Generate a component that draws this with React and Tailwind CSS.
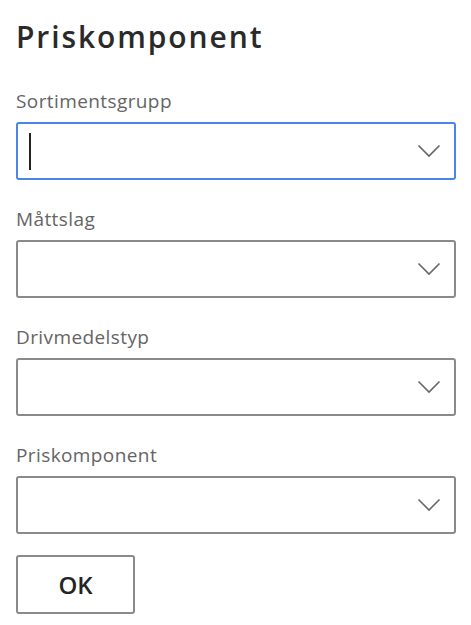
import React from "react";

function Chevron() {
  return (
    <svg width="24" height="14" viewBox="0 0 24 14" fill="none">
      <path d="M1.5 1.5 L12 12 L22.5 1.5" stroke="#666" strokeWidth="1.6" />
    </svg>
  );
}

function Field({ label, focused }) {
  return (
    <div className="flex flex-col">
      <div className="h-[30px] leading-[30px] text-[19px] tracking-[0.4px] text-[#646464]">{label}</div>
      <div
        className={`mt-[6px] h-[58px] w-[440px] rounded-[3px] flex items-center justify-between pl-[11px] pr-[13px] ${
          focused ? "border-2 border-[#4a86e8]" : "border-2 border-[#8a8a8a]"
        }`}
      >
        <div>{focused && <div className="w-[2px] h-[37px] bg-[#222]" />}</div>
        <Chevron />
      </div>
    </div>
  );
}

export default function App() {
  return (
    <div
      className="bg-white w-[471px] h-[625px] px-4 pt-[14px]"
      style={{ fontFamily: '"Open Sans", "Noto Sans", sans-serif' }}
    >
      <h1 className="h-[72px] text-[30px] leading-[46px] tracking-[1.9px] font-semibold text-[#2a2a2a]">
        Priskomponent
      </h1>
      <div className="flex flex-col gap-[24px]">
        <Field label="Sortimentsgrupp" focused />
        <Field label="Måttslag" />
        <Field label="Drivmedelstyp" />
        <Field label="Priskomponent" />
      </div>
      <button className="mt-[21px] h-[59px] w-[119px] rounded-[3px] border-2 border-[#8a8a8a] text-[24px] font-semibold text-[#242424]">
        OK
      </button>
    </div>
  );
}
